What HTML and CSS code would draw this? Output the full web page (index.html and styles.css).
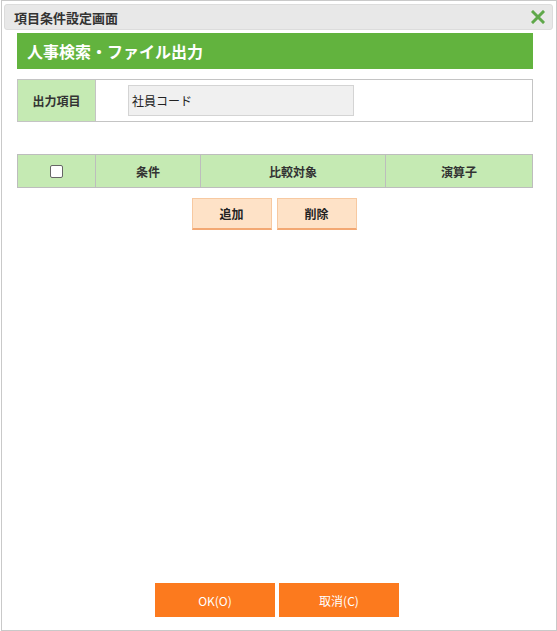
FILE: index.html
```html
<!DOCTYPE html>
<html lang="ja">
<head>
<meta charset="utf-8">
<link rel="stylesheet" href="styles.css">
</head>
<body>
<div class="dialog">
  <div class="titlebar">
    <span class="title">項目条件設定画面</span>
    <svg class="close" width="14" height="14" viewBox="0 0 14 14"><path d="M2 2 L12 12 M12 2 L2 12" stroke="#5fa84a" stroke-width="3" stroke-linecap="square"/></svg>
  </div>
  <div class="content">
    <div class="header">人事検索・ファイル出力</div>
    <div class="formrow">
      <div class="label">出力項目</div>
      <div class="value"><div class="input">社員コード</div></div>
    </div>
    <div class="grid">
      <div class="gcell chk"><span class="checkbox"></span></div>
      <div class="gcell">条件</div>
      <div class="gcell">比較対象</div>
      <div class="gcell last">演算子</div>
    </div>
    <div class="actions">
      <button class="sub">追加</button>
      <button class="sub">削除</button>
    </div>
  </div>
  <div class="footer">
    <button class="main">OK(O)</button>
    <button class="main">取消(C)</button>
  </div>
</div>
</body>
</html>
```
FILE: styles.css
```css
* { box-sizing: border-box; }
html, body { margin: 0; padding: 0; background: #fff; }
body {
  font-family: "Noto Sans CJK JP", "Noto Sans", sans-serif;
  color: #333;
  width: 557px;
  height: 631px;
  overflow: hidden;
}
.dialog {
  margin: 0 0 0 1px;
  width: 556px;
  height: 631px;
  border: 1px solid #c9c9c9;
  background: #fff;
  display: flex;
  flex-direction: column;
  padding: 3px 3px 0 2px;
}
.titlebar {
  height: 26px;
  background: #e8e8e8;
  border: 1px solid #dcdcdc;
  border-radius: 3px;
  display: flex;
  align-items: center;
  justify-content: space-between;
  padding: 0 7px 0 9px;
}
.title {
  font-size: 13px;
  font-weight: bold;
  color: #333;
  line-height: 1;
}
.close { display: block; }
.content {
  flex: 1;
  padding: 3px 20px 0 13px;
}
.header {
  height: 36px;
  background: #62b33e;
  color: #fff;
  font-size: 16px;
  font-weight: bold;
  display: flex;
  align-items: center;
  padding-left: 10px;
}
.formrow {
  margin-top: 10px;
  display: flex;
  height: 43px;
  border: 1px solid #c4c4c4;
}
.label {
  width: 78px;
  background: #c5eab3;
  border-right: 1px solid #c4c4c4;
  display: flex;
  align-items: center;
  justify-content: center;
  font-size: 12px;
  font-weight: bold;
  color: #333;
}
.value {
  flex: 1;
  display: flex;
  align-items: center;
  padding-left: 32px;
}
.input {
  width: 226px;
  height: 31px;
  background: #f0f0f0;
  border: 1px solid #d4d4d4;
  font-size: 12px;
  color: #222;
  display: flex;
  align-items: center;
  padding-left: 3px;
}
.grid {
  margin-top: 32px;
  display: grid;
  grid-template-columns: 78px 105px 185px 1fr;
  height: 34px;
  border: 1px solid #bdbdbd;
  background: #c5eab3;
}
.gcell {
  border-right: 1px solid #bdbdbd;
  display: flex;
  align-items: center;
  justify-content: center;
  font-size: 12px;
  font-weight: bold;
  color: #333;
}
.gcell.last { border-right: none; }
.checkbox {
  width: 13px;
  height: 13px;
  border: 1px solid #666;
  border-radius: 2px;
  background: #fff;
}
.actions {
  margin-top: 10px;
  display: flex;
  justify-content: center;
  gap: 5px;
  padding-right: 2px;
}
button { font-family: inherit; cursor: pointer; }
.sub {
  width: 80px;
  height: 32px;
  background: #fee2c7;
  border: 1px solid #f7c9a1;
  border-bottom: 2px solid #f3a873;
  font-size: 12px;
  font-weight: bold;
  color: #222;
  padding: 0;
}
.footer {
  height: 48px;
  display: flex;
  justify-content: center;
  gap: 4px;
  padding-right: 3px;
  padding-top: 1px;
}
.main {
  width: 120px;
  height: 34px;
  background: #fc7a1e;
  border: none;
  color: #fff;
  font-size: 12px;
  padding: 0;
}
```
